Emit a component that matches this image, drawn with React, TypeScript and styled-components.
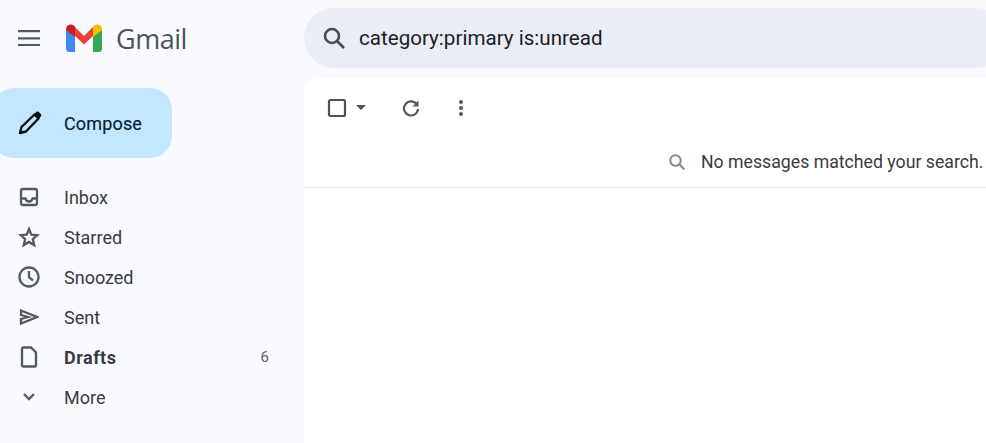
import React from "react";
import styled, { createGlobalStyle } from "styled-components";

const Global = createGlobalStyle`
  html, body { margin: 0; padding: 0; width: 986px; height: 443px; overflow: hidden; background: #f8faff; }
  #root { width: 986px; height: 443px; }
  * { box-sizing: border-box; }
`;

const Page = styled.div`
  display: grid;
  grid-template-columns: 304px 1fr;
  width: 986px;
  height: 443px;
  background: #f8faff;
  font-family: Roboto, "Liberation Sans", sans-serif;
  overflow: hidden;
`;

const Sidebar = styled.aside`
  display: flex;
  flex-direction: column;
`;

const Brand = styled.div`
  display: flex;
  align-items: center;
  height: 76px;
  padding: 0 0 0 17px;
`;

const IconSlot = styled.span<{ $w?: number; $mr?: number }>`
  display: flex;
  align-items: center;
  justify-content: center;
  flex: none;
  width: ${(p) => p.$w ?? 24}px;
  margin-right: ${(p) => p.$mr ?? 0}px;
`;

const Wordmark = styled.span`
  font-family: "Open Sans", "Liberation Sans", sans-serif;
  font-size: 27px;
  letter-spacing: -0.5px;
  color: #505357;
  line-height: 1;
  margin-top: 0;
  margin-left: -1px;
`;

const Compose = styled.div`
  display: flex;
  align-items: center;
  width: 180px;
  height: 70px;
  margin-top: 12px;
  margin-left: -8px;
  padding-left: 25px;
  background: #c2e7ff;
  border-radius: 22px;
  font-size: 18px;
  font-weight: 400;
  letter-spacing: 0.15px;
  -webkit-text-stroke: 0.15px #041e32;
  color: #041e32;
`;

const Nav = styled.nav`
  display: flex;
  flex-direction: column;
  margin-top: 20px;
`;

const Row = styled.div<{ $bold?: boolean }>`
  display: flex;
  align-items: center;
  height: 40px;
  padding: 0 0 2px 17px;
  width: 269px;
  font-size: 18px;
  font-weight: ${(p) => (p.$bold ? 700 : 400)};
  letter-spacing: ${(p) => (p.$bold ? "0.5px" : "0")};
  color: #383b3f;
`;

const Count = styled.span`
  margin-left: auto;
  font-size: 15px;
  font-weight: 400;
  letter-spacing: 0;
  color: #5f6266;
`;

const Main = styled.main`
  display: flex;
  flex-direction: column;
  padding-top: 8px;
`;

const Search = styled.div`
  display: flex;
  align-items: center;
  height: 60px;
  margin-right: -20px;
  padding-left: 18px;
  background: #e9eef6;
  border-radius: 30px;
  font-size: 20.6px;
  color: #1f2023;
`;

const Panel = styled.section`
  flex: 1;
  margin-top: 10px;
  margin-right: -20px;
  background: #fff;
  border-radius: 16px 16px 0 0;
  display: flex;
  flex-direction: column;
`;

const Toolbar = styled.div`
  display: flex;
  align-items: center;
  height: 60px;
  padding-left: 22px;
`;

const Notice = styled.div`
  display: flex;
  align-items: center;
  height: 50px;
  padding: 0 0 2px 363px;
  border-bottom: 1px solid #e8eaed;
  font-size: 17.7px;
  color: #383b3f;
  white-space: nowrap;
`;

const Gmark = () => (
  <svg width="38" height="28" viewBox="0 0 38 28">
    <path d="M1 6 V24.500 Q1 28 4.500 28 H10 V11Z" fill="#4285f4" />
    <path d="M28 28 H33.500 Q37 28 37 24.500 V6 L28 11Z" fill="#34a853" />
    <path d="M10 12 L19 20.500 L28 12 V3 L19 12 L10 3Z" fill="#ea4335" />
    <path d="M1 6 V5 C1 1 6 -1.500 10 2.500 V13Z" fill="#c5221f" />
    <path d="M28 2.500 C32 -1.500 37 1 37 5 V6 L28 13Z" fill="#fbbc04" />
  </svg>
);

const stroke = { fill: "none", stroke: "#55585c", strokeWidth: 2.300 };

const Menu = () => (
  <svg width="24" height="24" viewBox="0 0 24 24"><path d="M1 5.200H23M1 12.300H23M1 19H23" fill="none" stroke="#55585c" strokeWidth={2.200} /></svg>
);
const Pencil = () => (
  <svg width="26" height="26" viewBox="0 0 26 26">
    <path d="M3 23 L4.500 17 L17.500 4.500 L21.500 8.500 L9 21.500Z" fill="none" stroke="#0b0f14" strokeWidth="2.400" strokeLinejoin="round" />
    <path d="M16.500 4.500 L19.500 1.800 Q20.500 1 21.500 1.800 L24 4.300 Q24.800 5.300 24 6.300 L21.500 9.500Z" fill="#0b0f14" />
  </svg>
);
const Inbox = () => (
  <svg width="20" height="20" viewBox="0 0 20 20">
    <rect x="2" y="2" width="16" height="16" rx="2" {...stroke} />
    <path d="M2 11.500H6.500C7 13.500 8.200 14.500 10 14.500S13 13.500 13.500 11.500H18" {...stroke} />
  </svg>
);
const Star = () => (
  <svg width="22" height="22" viewBox="0 0 24 24"><path d="M12 3.500 14.600 9.500 21 10 16.200 14.300 17.600 20.700 12 17.300 6.400 20.700 7.800 14.300 3 10 9.400 9.500Z" {...stroke} strokeWidth={2.600} /></svg>
);
const Clock = () => (
  <svg width="24" height="24" viewBox="0 0 24 24"><circle cx="12" cy="12" r="9.500" {...stroke} /><path d="M12 6V12.300L16 15.500" {...stroke} /></svg>
);
const Send = () => (
  <svg width="20" height="20" viewBox="0 0 20 20"><path d="M2 3.500 18 10 2 16.500V12L9 10 2 8Z" {...stroke} /></svg>
);
const Doc = () => (
  <svg width="20" height="22" viewBox="0 0 20 22"><path d="M3 3Q3 1.500 4.500 1.500H12L17 6.500V19Q17 20.500 15.500 20.500H4.500Q3 20.500 3 19Z" {...stroke} /></svg>
);
const Chevron = () => (
  <svg width="14" height="10" viewBox="0 0 14 10"><path d="M2 2 7 7 12 2" {...stroke} /></svg>
);
const SearchIcon = ({ size, color, sw }: { size: number; color: string; sw: number }) => (
  <svg width={size} height={size} viewBox="0 0 24 24">
    <circle cx="10" cy="10" r="7" fill="none" stroke={color} strokeWidth={sw} />
    <path d="M15 15 22 22" fill="none" stroke={color} strokeWidth={sw} />
  </svg>
);
const Check = () => (
  <svg width="20" height="20" viewBox="0 0 20 20"><rect x="2" y="2" width="16" height="16" rx="1.500" fill="none" stroke="#4d5156" strokeWidth="2.200" /></svg>
);
const Caret = () => (
  <svg width="10" height="6" viewBox="0 0 10 6"><path d="M0 0H10L5 5Z" fill="#4d5156" /></svg>
);
const Refresh = () => (
  <svg width="18" height="18" viewBox="0 0 18 18">
    <path d="M14.800 5.500A7 7 0 1 0 16 10" fill="none" stroke="#55585c" strokeWidth="2.200" />
    <path d="M16.500 1.500V7.500H10.500Z" fill="#55585c" />
  </svg>
);
const Dots = () => (
  <svg width="6" height="18" viewBox="0 0 6 18"><circle cx="3" cy="3" r="2" fill="#55585c" /><circle cx="3" cy="9" r="2" fill="#55585c" /><circle cx="3" cy="15" r="2" fill="#55585c" /></svg>
);

const items: { label: string; icon: React.ReactNode; bold?: boolean; count?: string }[] = [
  { label: "Inbox", icon: <Inbox /> },
  { label: "Starred", icon: <Star /> },
  { label: "Snoozed", icon: <Clock /> },
  { label: "Sent", icon: <Send /> },
  { label: "Drafts", icon: <Doc />, bold: true, count: "6" },
  { label: "More", icon: <Chevron /> },
];

export default function App() {
  return (
    <Page>
      <Global />
      <Sidebar>
        <Brand>
          <IconSlot $mr={24}><Menu /></IconSlot>
          <IconSlot $w={38} $mr={14}><Gmark /></IconSlot>
          <Wordmark>Gmail</Wordmark>
        </Brand>
        <Compose>
          <IconSlot $w={26} $mr={21}><Pencil /></IconSlot>
          Compose
        </Compose>
        <Nav>
          {items.map((it) => (
            <Row key={it.label} $bold={it.bold}>
              <IconSlot $w={24} $mr={23}>{it.icon}</IconSlot>
              {it.label}
              {it.count && <Count>{it.count}</Count>}
            </Row>
          ))}
        </Nav>
      </Sidebar>
      <Main>
        <Search>
          <IconSlot $w={24} $mr={13}><SearchIcon size={24} color="#4a4e53" sw={2.600} /></IconSlot>
          category:primary is:unread
        </Search>
        <Panel>
          <Toolbar>
            <IconSlot $w={22} $mr={8}><Check /></IconSlot>
            <IconSlot $w={10} $mr={36}><Caret /></IconSlot>
            <IconSlot $w={18} $mr={38}><Refresh /></IconSlot>
            <IconSlot $w={6}><Dots /></IconSlot>
          </Toolbar>
          <Notice>
            <IconSlot $w={20} $mr={14}><SearchIcon size={18} color="#8a8d90" sw={2.800} /></IconSlot>
            No messages matched your search.
          </Notice>
        </Panel>
      </Main>
    </Page>
  );
}
